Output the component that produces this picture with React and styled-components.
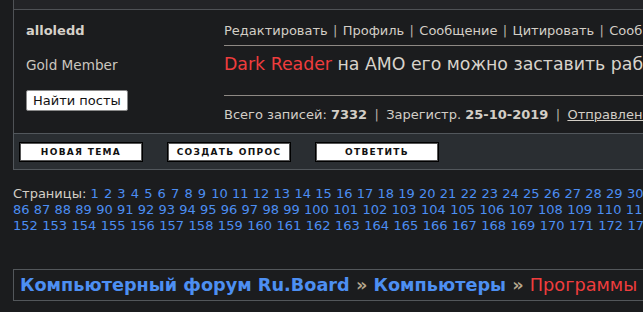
import React from "react";
import styled, { createGlobalStyle } from "styled-components";

const GlobalStyle = createGlobalStyle`
  html, body {
    margin: 0;
    padding: 0;
    background: #1b1c1e;
    overflow: hidden;
  }
  body {
    font-family: "DejaVu Sans", Verdana, sans-serif;
    font-size: 13px;
    color: #d3cec6;
  }
`;

const Page = styled.div`
  width: 1900px;
`;

const PostTable = styled.div`
  margin-left: 13px;
  border-left: 1px solid #4f5256;
`;

const TopStrip = styled.div`
  height: 9px;
  background: #232427;
  border-bottom: 1px solid #4f5256;
`;

const PostRow = styled.div`
  display: grid;
  grid-template-columns: 210px 1fr;
  height: 123px;
`;

const AuthorCell = styled.div`
  display: flex;
  flex-direction: column;
  align-items: flex-start;
  padding: 13px 0 0 12px;
`;

const Nick = styled.div`
  font-weight: bold;
  line-height: 16px;
  color: #d6d1c9;
`;

const Rank = styled.div`
  margin-top: 18px;
  font-size: 13.6px;
  line-height: 16px;
  color: #cbc6be;
`;

const FindButton = styled.button`
  margin-top: 17px;
  height: 21px;
  padding: 0 6px;
  font-family: "DejaVu Sans", Verdana, sans-serif;
  font-size: 13px;
  color: #111;
  background: #fff;
  border: 1px solid #8a8a8a;
  border-radius: 2px;
`;

const BodyCell = styled.div`
  display: flex;
  flex-direction: column;
`;

const Actions = styled.div`
  margin-top: 13px;
  padding-bottom: 6px;
  line-height: 16px;
  border-bottom: 1px solid #8e8984;
  white-space: pre;
`;

const Sep = styled.span`
  color: #b8b3ab;
  margin: 0 ${(p) => p.$gap}px;
`;

const Message = styled.div`
  padding: 8px 0 0;
  height: 41px;
  font-size: 17.33px;
  line-height: 20px;
  white-space: nowrap;
  border-bottom: 1px solid #8e8984;
  color: #d8d3cb;
`;

const Red = styled.span`
  color: #f03d3d;
`;

const Stats = styled.div`
  margin-top: 11px;
  line-height: 16px;
  white-space: pre;
`;

const Underlined = styled.span`
  text-decoration: underline;
`;

const ButtonBar = styled.div`
  margin-left: 13px;
  height: 35px;
  display: flex;
  align-items: center;
  gap: 24px;
  padding-left: 5px;
  background: #2a2e32;
  border-top: 1px solid #52575c;
  border-bottom: 1px solid #52575c;
  border-left: 1px solid #52575c;
`;

const BarButton = styled.div`
  box-sizing: border-box;
  width: 124px;
  height: 20px;
  display: flex;
  align-items: center;
  justify-content: center;
  background: #fff;
  border: 1px solid #000;
  box-shadow: inset 1px 1px 0 #555, inset -1px -1px 0 #555;
  color: #111;
  font-size: 9px;
  font-weight: bold;
  letter-spacing: 1.3px;
`;

const Pages = styled.div`
  margin: 16px 0 0 13px;
  line-height: 16px;
  white-space: nowrap;
`;

const PageLine = styled.div``;

const PageLink = styled.span`
  color: #4c8ef2;
  margin-right: ${(p) => p.$extra}px;
`;

const Crumbs = styled.div`
  margin: 35px 0 0 13px;
  height: 30px;
  display: flex;
  align-items: center;
  padding-left: 6px;
  border: 1px solid #53575b;
  font-size: 17.7px;
  white-space: pre;
`;

const Crumb = styled.span`
  color: #4d8ff2;
  font-weight: bold;
`;

const Arrow = styled.span`
  color: #b5a68c;
  font-weight: bold;
`;

const range = (a, b) => Array.from({ length: b - a + 1 }, (_, i) => a + i);
const lines = [range(1, 85), range(86, 151), range(152, 214)];

export default function App() {
  const actions = ["Редактировать", "Профиль", "Сообщение", "Цитировать", "Сообщить модератору"];
  return (
    <Page>
      <GlobalStyle />
      <PostTable>
        <TopStrip />
        <PostRow>
          <AuthorCell>
            <Nick>alloledd</Nick>
            <Rank>Gold Member</Rank>
            <FindButton>Найти посты</FindButton>
          </AuthorCell>
          <BodyCell>
            <Actions>
              {actions.map((a, i) => (
                <React.Fragment key={a}>
                  {i > 0 && <Sep $gap={1.2}> | </Sep>}
                  {a}
                </React.Fragment>
              ))}
            </Actions>
            <Message>
              <Red>Dark Reader</Red> на AMO его можно заставить работать и на этом сайте
            </Message>
            <Stats>
              Всего записей: <b>7332</b>
              <Sep $gap={3.2}> | </Sep>
              Зарегистр. <b>25-10-2019</b>
              <Sep $gap={3.2}> | </Sep>
              <Underlined>Отправлено: 15:20 08-03-2024</Underlined>
            </Stats>
          </BodyCell>
        </PostRow>
      </PostTable>
      <ButtonBar>
        <BarButton>НОВАЯ ТЕМА</BarButton>
        <BarButton>СОЗДАТЬ ОПРОС</BarButton>
        <BarButton>ОТВЕТИТЬ</BarButton>
      </ButtonBar>
      <Pages>
        {lines.map((nums, li) => (
          <PageLine key={li}>
            {li === 0 && "Страницы: "}
            {nums.map((n) => (
              <React.Fragment key={n}>
                <PageLink $extra={n < 10 ? 1 : n < 100 ? 0.1 : 0.3}>{n}</PageLink>{" "}
              </React.Fragment>
            ))}
          </PageLine>
        ))}
      </Pages>
      <Crumbs>
        <Crumb>Компьютерный форум Ru.Board</Crumb>
        <Arrow> » </Arrow>
        <Crumb>Компьютеры</Crumb>
        <Arrow> » </Arrow>
        <Red>Программы</Red>
      </Crumbs>
    </Page>
  );
}
